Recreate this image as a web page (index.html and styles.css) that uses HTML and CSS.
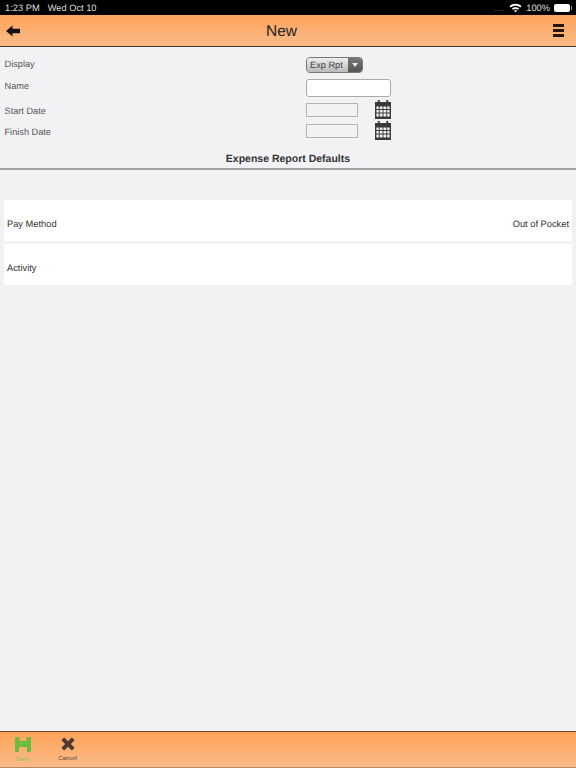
FILE: index.html
```html
<!DOCTYPE html>
<html lang="en">
<head>
    <meta charset="UTF-8">
    <meta name="viewport" content="width=device-width, initial-scale=1.0">
    <title>New</title>
    <link rel="stylesheet" href="styles.css">
</head>
<body>
    <div class="status-bar">
        <span class="status-time">1:23 PM</span>
        <span class="status-date">Wed Oct 10</span>
        <span class="status-right">
            <span class="signal">....</span>
            <svg class="wifi" width="13" height="10" viewBox="0 0 13 10">
                <path d="M0.5 3.2C4 0 9 0 12.5 3.2L11.3 4.5C8.4 2 4.6 2 1.7 4.5Z" fill="#fff"/>
                <path d="M2.8 5.5C4.9 3.7 8.1 3.7 10.2 5.5L9 6.8C7.6 5.6 5.4 5.6 4 6.8Z" fill="#fff"/>
                <path d="M5 7.6C5.9 7 7.1 7 8 7.6L6.5 9.4Z" fill="#fff"/>
            </svg>
            <span>100%</span>
            <span class="battery"></span>
        </span>
    </div>

    <header class="top-bar">
        <svg class="back-icon" width="14" height="12" viewBox="0 0 14 12">
            <path d="M0 6L6.5 0.5V3.8H14V8.2H6.5V11.5Z" fill="#111"/>
        </svg>
        <h1>New</h1>
        <div class="menu-icon"><span></span><span></span><span></span></div>
    </header>

    <main class="content">
        <div class="form">
            <div class="form-row row-display">
                <label>Display</label>
                <div class="select">
                    <span class="select-value">Exp Rpt</span>
                    <span class="select-arrow"></span>
                </div>
            </div>
            <div class="form-row row-name">
                <label>Name</label>
                <input type="text" class="text-input">
            </div>
            <div class="form-row row-date">
                <label>Start Date</label>
                <input type="text" class="date-input">
                <svg class="calendar" width="16" height="19" viewBox="0 0 17 19" preserveAspectRatio="none">
                    <use href="#calendar-icon"/>
                </svg>
            </div>
            <div class="form-row row-date">
                <label>Finish Date</label>
                <input type="text" class="date-input">
                <svg class="calendar" width="16" height="19" viewBox="0 0 17 19" preserveAspectRatio="none">
                    <use href="#calendar-icon"/>
                </svg>
            </div>
        </div>

        <h2 class="section-title">Expense Report Defaults</h2>

        <div class="list">
            <div class="list-row">
                <span>Pay Method</span>
                <span>Out of Pocket</span>
            </div>
            <div class="list-row">
                <span>Activity</span>
            </div>
        </div>
    </main>

    <footer class="bottom-bar">
        <div class="tool tool-save">
            <svg width="16" height="15" viewBox="0 0 16 15">
                <path d="M0 1.5C0 0.7 0.7 0 1.5 0H4.5V4H11.5V0H14.5C15.3 0 16 0.7 16 1.5V13.5C16 14.3 15.3 15 14.5 15H12V10H4V15H1.5C0.7 15 0 14.3 0 13.5Z" fill="#6cbb3c"/>
            </svg>
            <span>Save</span>
        </div>
        <div class="tool tool-cancel">
            <svg width="14" height="14" viewBox="0 0 14 14">
                <path d="M3.2 0.4L7 4.2L10.8 0.4L13.6 3.2L9.8 7L13.6 10.8L10.8 13.6L7 9.8L3.2 13.6L0.4 10.8L4.2 7L0.4 3.2Z" fill="#4a3a34"/>
            </svg>
            <span>Cancel</span>
        </div>
    </footer>

    <svg class="icon-defs" width="0" height="0">
        <symbol id="calendar-icon" viewBox="0 0 17 19" preserveAspectRatio="none">
            <path fill-rule="evenodd" fill="#3a3a3c" d="M3 0H5V2H12V0H14V2H17V19H0V2H3ZM1.5 6.5V9H4V6.5ZM5 6.5V9H8V6.5ZM9 6.5V9H12V6.5ZM13 6.5V9H15.5V6.5ZM1.5 10V12.5H4V10ZM5 10V12.5H8V10ZM9 10V12.5H12V10ZM13 10V12.5H15.5V10ZM1.5 13.5V16.5H4V13.5ZM5 13.5V16.5H8V13.5ZM9 13.5V16.5H12V13.5ZM13 13.5V16.5H15.5V13.5Z"/>
        </symbol>
    </svg>
</body>
</html>
```

FILE: styles.css
```css
* {
    box-sizing: border-box;
}
html, body {
    height: 100%;
}
body {
    margin: 0;
    display: flex;
    flex-direction: column;
    font-family: "Liberation Sans", Arial, sans-serif;
    text-rendering: geometricPrecision;
    background-color: #f2f1f4;
    color: #333;
    overflow: hidden;
}
.status-bar {
    display: flex;
    align-items: center;
    height: 15px;
    padding: 0 6px 0 5px;
    background-color: #000;
    color: #ddd;
    font-size: 9.3px;
}
.status-date {
    margin-left: 8px;
}
.status-right {
    display: flex;
    align-items: center;
    margin-left: auto;
    gap: 4px;
}
.signal {
    color: #555;
    margin-right: 1px;
}
.battery {
    width: 16px;
    height: 8px;
    border-radius: 2px;
    background-color: #fff;
    position: relative;
}
.battery::after {
    content: "";
    position: absolute;
    top: 2px;
    right: -2px;
    width: 1px;
    height: 4px;
    background-color: #888;
}
.top-bar {
    display: flex;
    align-items: center;
    justify-content: space-between;
    height: 32px;
    padding: 0 12px 0 6px;
    background: linear-gradient(#ffa35a, #f9bb88);
    border-bottom: 1px solid #4a3320;
}
.top-bar h1 {
    flex: 1;
    margin: 0;
    padding: 3px 10px 0 0;
    font-size: 15.5px;
    font-weight: normal;
    text-align: center;
    color: #222;
}
.menu-icon {
    display: flex;
    flex-direction: column;
    gap: 2.5px;
    width: 11px;
}
.menu-icon span {
    height: 2.5px;
    background-color: #2a1408;
}
.content {
    flex: 1;
}
.form {
    padding-top: 9px;
}
.form-row {
    display: grid;
    grid-template-columns: 306px auto 1fr;
    align-items: center;
}
.form-row label {
    padding-left: 4.5px;
    font-size: 9.2px;
    color: #555;
}
.row-display label {
    padding-bottom: 2px;
}
.row-name label {
    padding-bottom: 4px;
}
.row-date label {
    padding-top: 3px;
}
.row-display {
    height: 18px;
}
.row-name {
    height: 22px;
    margin-top: 3px;
}
.row-date {
    height: 21px;
}
.select {
    display: flex;
    width: 57px;
    height: 16px;
    border: 1px solid #777;
    border-radius: 4px;
    overflow: hidden;
    font-size: 9.2px;
    color: #444;
}
.select-value {
    flex: 1;
    padding-left: 3px;
    line-height: 15px;
    background: linear-gradient(#eee, #bbb);
}
.select-arrow {
    width: 14px;
    background: linear-gradient(#777, #555);
    position: relative;
}
.select-arrow::after {
    content: "";
    position: absolute;
    top: 5px;
    left: 4px;
    border-left: 3px solid transparent;
    border-right: 3px solid transparent;
    border-top: 4px solid #eee;
}
.text-input {
    width: 85px;
    height: 18px;
    padding: 0;
    background-color: #fff;
    border: 1px solid #aaa;
    border-radius: 3px;
}
.date-input {
    width: 52px;
    height: 14px;
    padding: 0;
    background-color: #f2f1f4;
    border: 1px solid #b4b4b4;
}
.calendar {
    margin-left: 17px;
}
.section-title {
    margin: 10px 0 0;
    height: 19px;
    font-size: 10.5px;
    line-height: 16px;
    text-align: center;
    color: #333;
    border-bottom: 2px solid #a0a0a2;
}
.list {
    display: flex;
    flex-direction: column;
    gap: 3px;
    margin: 30px 4px 0;
}
.list-row {
    display: flex;
    align-items: center;
    justify-content: space-between;
    height: 41px;
    padding: 7px 3px 0;
    background-color: #fff;
    font-size: 9.3px;
    color: #333;
}
.bottom-bar {
    display: flex;
    height: 37px;
    padding-left: 9px;
    background: linear-gradient(#ffa35a, #f9bb88);
    border-top: 1px solid #6a4a2a;
    border-bottom: 1px solid #b98a62;
}
.tool {
    display: flex;
    flex-direction: column;
    align-items: center;
    width: 27px;
    margin-right: 18px;
    padding-top: 5px;
    font-size: 6px;
}
.tool span {
    margin-top: 5px;
}
.tool-save {
    color: #8fc56a;
}
.tool-cancel {
    color: #5a4a40;
}
.icon-defs {
    position: absolute;
}
```
